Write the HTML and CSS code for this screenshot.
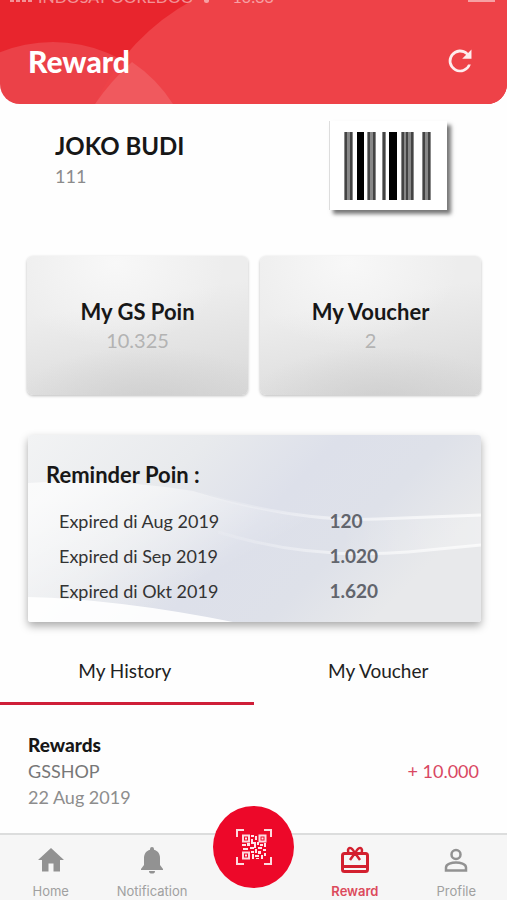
FILE: index.html
```html
<!DOCTYPE html>
<html lang="id">
<head>
<meta charset="utf-8">
<meta name="viewport" content="width=device-width, initial-scale=1">
<title>Reward</title>
<link rel="stylesheet" href="styles.css">
</head>
<body>
<div class="app">
  <header class="header">
    <svg class="header-art" aria-hidden="true">
      <circle cx="53" cy="185" r="143" fill="#fff" fill-opacity=".13"/>
      <path d="M95 104A226 226 0 0 1 193 0H3000V104Z" fill="#ee4248"/>
      <path d="M95 104A226 226 0 0 1 132 62A143 143 0 0 1 173 104Z" fill="#fff" fill-opacity=".12"/>
    </svg>
    <div class="status">
      <span class="signal"><i></i><i></i><i></i><i></i></span>
      <span class="carrier">INDOSAT OOREDOO</span>
      <span class="wifi"></span>
      <span class="time">10:33</span>
      <span class="battery"></span>
    </div>
    <div class="title-row">
      <h1>Reward</h1>
      <button class="refresh" type="button" aria-label="Refresh">
        <svg viewBox="0 0 24 24"><path fill="#fff" fill-opacity=".9" d="M19.500 15.200A8 8 0 1 1 17.700 6.300L14 10H22.600V1.400L19.500 4.500A10.500 10.500 0 1 0 22 15.200Z"/></svg>
      </button>
    </div>
  </header>

  <main>
    <section class="member">
      <div>
        <h2 class="name">JOKO BUDI</h2>
        <p class="number">111</p>
      </div>
      <div class="barcode">
        <svg viewBox="0 0 88 68" role="img" aria-label="Barcode">
          <g fill="#888"><path d="M0 0h9v68H0zM23 0h9v68H23zM38 0h4v68H38zM57 0h13v68H57zM78 0h9v68H78z"/></g>
          <g fill="#444"><path d="M1 0h2v68H1zM6 0h2v68H6zM24 0h2v68H24zM29 0h2v68H29zM39 0h2v68H39zM58 0h2v68H58zM62 0h2v68H62zM67 0h2v68H67zM79 0h2v68H79zM84 0h2v68H84z"/></g>
          <g fill="#000"><path d="M13 0h7v68H13zM45 0h8v68H45z"/></g>
        </svg>
      </div>
    </section>

    <section class="cards">
      <div class="card"><h2>My GS Poin</h2><p>10.325</p></div>
      <div class="card"><h2>My Voucher</h2><p>2</p></div>
    </section>

    <section class="reminder">
      <svg class="reminder-art" viewBox="0 0 453 187" preserveAspectRatio="none" aria-hidden="true">
        <defs>
          <linearGradient id="base" x1="0" y1="0" x2="1" y2=".4">
            <stop offset="0" stop-color="#f2f3f4"/><stop offset=".35" stop-color="#e8eaed"/>
            <stop offset=".6" stop-color="#dde0ea"/><stop offset=".8" stop-color="#dee1e9"/><stop offset="1" stop-color="#e8e9eb"/>
          </linearGradient>
          <linearGradient id="glow" gradientUnits="userSpaceOnUse" x1="40" y1="50" x2="110" y2="180">
            <stop offset="0" stop-color="#fff" stop-opacity=".7"/><stop offset="1" stop-color="#fff" stop-opacity="0"/>
          </linearGradient>
          <linearGradient id="band" x1="0" y1="0" x2="1" y2="0">
            <stop offset="0" stop-color="#fff" stop-opacity="0"/><stop offset=".5" stop-color="#fff" stop-opacity="0"/><stop offset="1" stop-color="#fff" stop-opacity=".25"/>
          </linearGradient>
          <linearGradient id="line" x1="0" y1="0" x2="1" y2="0">
            <stop offset="0" stop-color="#fff" stop-opacity="0"/><stop offset=".5" stop-color="#fff" stop-opacity=".5"/><stop offset="1" stop-color="#fff" stop-opacity=".7"/>
          </linearGradient>
        </defs>
        <rect width="453" height="187" fill="url(#base)"/>
        <path d="M0 48Q80 42 165 56Q270 88 350 84L453 80V187H0Z" fill="url(#glow)"/>
        <path d="M165 56Q270 88 350 84L453 80V110L380 117Q280 125 190 97Z" fill="url(#band)"/>
        <path d="M165 56Q270 88 350 84L453 80M190 97Q280 125 380 117L453 110" fill="none" stroke="url(#line)" stroke-width="3"/>
        <path d="M0 162Q90 164 205 187H0Z" fill="#fff" fill-opacity=".9"/>
      </svg>
      <h2>Reminder Poin :</h2>
      <table>
        <tbody>
          <tr><th scope="row">Expired di Aug 2019</th><td>120</td></tr>
          <tr><th scope="row">Expired di Sep 2019</th><td>1.020</td></tr>
          <tr><th scope="row">Expired di Okt 2019</th><td>1.620</td></tr>
        </tbody>
      </table>
    </section>

    <div class="tabs" role="tablist">
      <button class="tab active" type="button" role="tab" aria-selected="true">My History</button>
      <button class="tab" type="button" role="tab" aria-selected="false">My Voucher</button>
    </div>

    <article class="entry">
      <div>
        <h3>Rewards</h3>
        <p class="shop">GSSHOP</p>
        <p class="date">22 Aug 2019</p>
      </div>
      <span class="amount">+ 10.000</span>
    </article>
  </main>

  <nav class="nav">
    <a href="#home"><svg viewBox="0 0 28 28"><path fill="#929292" d="M14 2 1 14H5V25.500H11.500V17.500H16.500V25.500H23V14H27Z"/></svg><span>Home</span></a>
    <a href="#notification"><svg viewBox="0 0 28 28"><path fill="#929292" d="M14 1a2 2 0 0 1 2 2v.8C20 5 22 8 22 12v7l3 4v1H3v-1l3-4v-7c0-4 2-7 6-8.200V3a2 2 0 0 1 2-2zM11 25h6a3 2.600 0 0 1-6 0z"/></svg><span>Notification</span></a>
    <div class="scan-slot">
      <button class="scan" type="button" aria-label="Scan QR">
        <svg viewBox="0 0 36 36" fill="none" stroke="#fff">
          <path stroke-width="2" stroke-opacity=".85" d="M1 8V1H8M28 1H35V8M35 28V35H28M8 35H1V28"/>
          <path stroke-width="2" stroke-opacity=".85" d="M7 6.500h6v6H7zM23.500 6.500h6v6h-6zM7 23.500h6v6H7z"/>
          <g fill="#fff" fill-opacity=".9" stroke="none"><path d="M9 8.500h2v2H9zM25.500 8.500h2v2h-2zM9 25.500h2v2H9zM15 6h3v2h-3zM19 7h2v4h-2zM15 10h2v3h3v2h-5zM21 13h2v3h-2zM6 15h4v2H6zM11 14h3v3h-3zM7 19h5v2H7zM14 18h4v2h-4zM18 15h2v4h-2zM24 15h3v2h-3zM28 14h2v4h-2zM22 18h4v2h-4zM27 20h3v2h-3zM15 22h3v2h-3zM19 20h2v4h-2zM22 22h3v3h-3zM16 25h2v5h-2zM19 26h4v2h-4zM25 26h2v4h-2zM28 24h2v3h-2zM20 29h3v1h-3z"/></g>
        </svg>
      </button>
    </div>
    <a href="#reward" class="current" aria-current="page"><svg viewBox="0 0 28 28" fill="none" stroke="#d3202f"><rect x="1.500" y="7.500" width="25" height="18" rx="2" stroke-width="3"/><path stroke-width="3" d="M2 20.500H26"/><path stroke-width="2.500" d="M14 8C12 2 8 0 7 4c0 2 0 3 1 4M14 8c2-6 6-8 7-4 0 2 0 3-1 4M14 7l-5 7M14 7l5 7"/></svg><span>Reward</span></a>
    <a href="#profile"><svg viewBox="0 0 28 28" fill="none" stroke="#929292" stroke-width="2.500"><circle cx="14" cy="8.500" r="4.500"/><path d="M4 24.500V21.500C4 18 10 16.500 14 16.500S24 18 24 21.500V24.500Z"/></svg><span>Profile</span></a>
  </nav>
</div>
</body>
</html>
```
FILE: styles.css
```css
* { box-sizing: border-box; margin: 0; padding: 0; }
body { font-family: Lato, "Open Sans", sans-serif; background: #fefefe; color: #171717; }
button { font: inherit; border: 0; background: none; cursor: pointer; }
a { text-decoration: none; color: inherit; }
svg { display: block; }

.app { min-height: 100vh; display: flex; flex-direction: column; }
main { flex: 1; }

.header { position: relative; overflow: hidden; background: #e8252d; color: #fff; border-radius: 0 0 20px 20px; }
.header-art { position: absolute; inset: 0; width: 100%; height: 100%; }
.status { position: relative; height: 4px; padding: 0 12px 0 10px; overflow: hidden; display: flex; align-items: flex-end; font-size: 16px; line-height: 14px; opacity: .5; }
.signal { display: flex; gap: 2px; width: 28px; padding-bottom: 2px; }
.signal i { width: 4px; height: 4px; background: #fff; }
.wifi { width: 5px; height: 3px; margin: 0 24px 1px 10px; background: #fff; border-radius: 0 0 3px 3px; }
.battery { margin-left: auto; width: 27px; height: 2px; margin-bottom: 2px; background: #fff; }
.title-row { position: relative; display: flex; align-items: center; justify-content: space-between; padding: 38px 34px 24px 28px; }
h1 { font-size: 30px; line-height: 38px; font-weight: 900; }
.refresh, .refresh svg { width: 26px; height: 26px; }

.member { display: flex; justify-content: space-between; align-items: flex-start; padding: 17px 60px 0 55px; }
.name { font-size: 24px; line-height: 30px; margin-top: 10px; font-weight: 700; }
.number { font-size: 18px; line-height: 30px; color: #8b8b8b; }
.barcode { background: #fff; padding: 11px 15px 10px 14px; border-left: 1px solid #ddd; box-shadow: 4px 4px 4px #777; }
.barcode svg { width: 88px; height: 68px; }

.cards { display: grid; grid-template-columns: 1fr 1fr; gap: 12px; padding: 46px 26px 0 27px; }
.card { height: 139px; border-radius: 6px; text-align: center; padding-top: 42px;
  background: radial-gradient(ellipse 60% 40% at 55% 105%, #c8c8c899, #c8c8c800), radial-gradient(ellipse 50% 60% at 40% 5%, #f8f8f8, #f8f8f800), linear-gradient(170deg, #ededed 35%, #d8d8d8);
  box-shadow: 0 1px 3px #bbb; }
.card h2 { font-size: 22px; line-height: 28px; font-weight: 700; }
.card p { font-size: 20px; line-height: 28px; color: #b3b3b3; }

.reminder { position: relative; margin: 40px 26px 0 28px; padding: 26px 18px 14px; box-shadow: 0 4px 8px #aaa; border-radius: 3px; }
.reminder-art { position: absolute; inset: 0; width: 100%; height: 100%; border-radius: 3px; }
.reminder h2 { position: relative; font-size: 22px; line-height: 28px; }
.reminder table { position: relative; width: 100%; border-collapse: collapse; margin-top: 14px; }
.reminder th, .reminder td { height: 35px; font-size: 18px; text-align: left; vertical-align: middle; }
.reminder th { width: 68%; padding-left: 13px; font-weight: 400; color: #333; }
.reminder td { font-size: 19px; font-weight: 700; color: #62656d; }

.tabs { display: grid; grid-template-columns: 1fr 1fr; margin-top: 25px; }
.tab { height: 58px; padding: 0 4px 9px 0; font-size: 19px; color: #222; border-bottom: 3px solid transparent; }
.tab.active { border-color: #cf1e38; }

.entry { display: flex; align-items: center; justify-content: space-between; padding: 27px 28px 19px; font-size: 18px; line-height: 26px; }
.entry h3 { font-size: 19px; line-height: 26px; font-weight: 900; }
.shop { color: #777; }
.date { color: #8d8d8d; }
.amount { color: #d94762; }

.nav { display: grid; grid-template-columns: repeat(5, 1fr); height: 67px; border-top: 2px solid #dcdddd; background: #f6f6f6; font-family: Inter, Roboto, sans-serif; }
.nav a { display: flex; flex-direction: column; align-items: center; padding-top: 11px; font-size: 13px; line-height: 18px; color: #a0a0a0; }
.nav a svg { width: 28px; height: 28px; margin-bottom: 8px; }
.nav .current { color: #dc4a5c; font-weight: 600; }
.scan-slot { position: relative; }
.scan { position: absolute; top: -29px; left: 50%; margin-left: -40px; width: 81px; height: 82px; border-radius: 50%; background: #ed0829; display: grid; place-items: center; }
.scan svg { width: 36px; height: 36px; }
```
